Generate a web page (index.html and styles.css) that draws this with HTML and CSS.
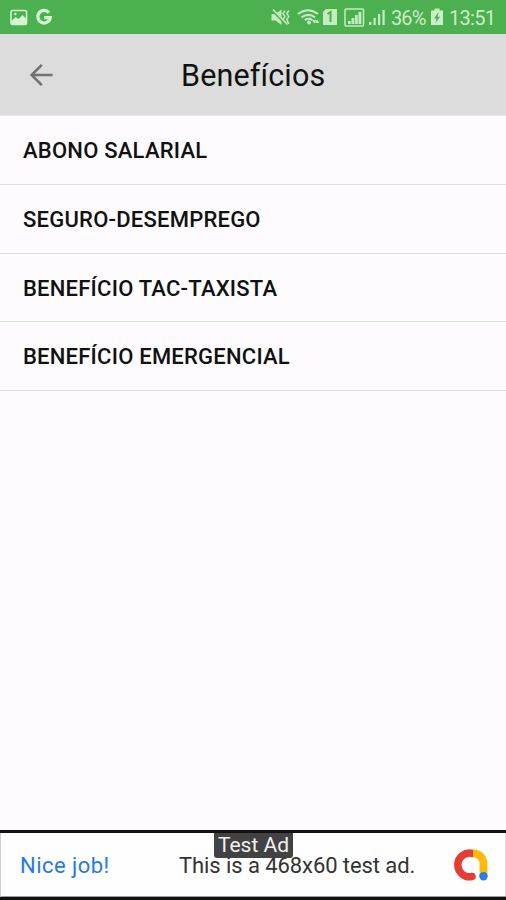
FILE: index.html
```html
<!DOCTYPE html>
<html lang="pt-BR">
<head>
<meta charset="utf-8">
<title>Benefícios</title>
<link rel="stylesheet" href="styles.css">
</head>
<body>
<div class="screen">
  <div class="status">
    <svg class="status-icons" width="60" height="34" viewBox="0 0 60 34">
      <rect x="11" y="10.500" width="15.500" height="14" rx="1.500" fill="none" stroke="#d3f5d0" stroke-width="1.600"/>
      <path d="M11.500 21l4-4 3 2 4-4 4 4v5h-15z" fill="#d3f5d0"/>
      <circle cx="15.300" cy="14" r="1.300" fill="#d3f5d0"/>
      <path d="M49 12.800A6.300 6.300 0 1 0 50.300 17.600H44.200" fill="none" stroke="#d3f5d0" stroke-width="3.300"/>
    </svg>
    <div class="status-right">
      <svg width="120" height="34" viewBox="270 0 120 34">
        <g fill="#c2edbd">
          <path d="M271.500 14h4l6-4.500v15.500l-6-4.500h-4z"/>
          <path d="M329 9h-3l-3 3v13h14V9z"/>
          <circle cx="309" cy="22.500" r="1.900"/>
          <path d="M312 20l2.200 3.500 2.200-3.500zM315 23l2.200-3.500 2.200 3.500z"/>
          <path d="M348 24v-3h2.800v3zM351.500 24v-6h2.800v6zM355 24v-9h2.800v9zM358.500 24V12h2.800v12z"/>
          <path d="M369 25v-3h2.400v3zM373.500 25v-7h2.200v7zM378 25V14h2.200v11zM382.500 25V10h2.200v15z"/>
        </g>
        <g fill="none" stroke="#c2edbd" stroke-width="2.100">
          <path d="M285 10.500l-2 3 2 3-2 3 2 4.500M288.800 10.500l-2 3 2 3-2 3 2 4.500" stroke-width="1.500"/>
          <path d="M298 14q10-7.500 20 0M301.500 17.300q7-5 13.500 0M304.800 20.200q4-3 7.500 0"/>
          <rect x="345" y="9" width="18.500" height="17" rx="1" stroke-width="1.500"/>
        </g>
        <path d="M272 10l15 15" stroke="#4caf50" stroke-width="2.500"/>
        <path d="M273 9.500l14.500 15" stroke="#c2edbd" stroke-width="1.700"/>
        <path d="M327.500 14l3-2v10" fill="none" stroke="#4caf50" stroke-width="2"/>
      </svg>
      <span class="percent">36%</span>
      <svg class="battery" width="12" height="34" viewBox="0 0 12 34">
        <path d="M3.500 8.500h5v2H12V25H0V10.500h3.500z" fill="#c9f0c5"/>
        <path d="M7.500 12L3 18.500h2.500L4.500 23 9 16.700H6.500z" fill="#57a95b"/>
      </svg>
      <span class="clock">13:51</span>
    </div>
  </div>
  <header class="bar">
    <svg class="back" width="24" height="24" viewBox="0 0 24 24">
      <path d="M12.800 1.800L2.600 12l10.200 10.200M2.600 12h21" fill="none" stroke="#727272" stroke-width="2.600"/>
    </svg>
    <h1 class="title">Benefícios</h1>
  </header>
  <ul class="list">
    <li>ABONO SALARIAL</li>
    <li>SEGURO-DESEMPREGO</li>
    <li>BENEFÍCIO TAC-TAXISTA</li>
    <li>BENEFÍCIO EMERGENCIAL</li>
  </ul>
  <footer class="ad">
    <span class="nice">Nice job!</span>
    <span class="message">This is a 468x60 test ad.</span>
    <svg class="logo" width="36" height="36" viewBox="0 0 36 36">
      <path d="M19.500 6.500A11.800 11.800 0 1 0 19 29.500" fill="none" stroke="#e53c33" stroke-width="7.500" stroke-linecap="round"/>
      <path d="M20 6.300c7.500 0 10.500 5 10.500 11.500V29" fill="none" stroke="#fbb90b" stroke-width="7.800"/>
      <circle cx="30.500" cy="29.200" r="4.200" fill="#287de8"/>
    </svg>
    <span class="badge">Test Ad</span>
  </footer>
</div>
</body>
</html>
```
FILE: styles.css
```css
* { box-sizing: border-box; }
body { margin: 0; font-family: Roboto, sans-serif; background: #fdfbfe; }
.screen { width: 506px; height: 900px; display: flex; flex-direction: column; }
svg { display: block; flex: none; }
.status { height: 34px; background: #4caf50; display: flex; justify-content: space-between; color: #c9f0c5; }
.status-right { display: flex; width: 236px; line-height: 36px; font-size: 20px; white-space: nowrap; }
.percent { width: 39px; margin-left: 1px; letter-spacing: -0.9px; }
.battery { margin-left: 1px; }
.clock { margin-left: 6px; letter-spacing: -0.7px; }
.bar { height: 82px; background: #dcdcdc; border-bottom: 1px solid #e9e8ea; display: flex; align-items: center; padding: 1px 0 0 29px; }
.title { margin: 2px 0 0 128px; font-size: 30.5px; font-weight: 400; color: #111; line-height: 36px; letter-spacing: 0.15px; }
.list { list-style: none; margin: 0; padding: 0; flex: 1; }
.list li { height: 68.75px; border-bottom: 1.5px solid #e0dee1; padding-left: 23px; font-size: 22px; font-weight: 500; line-height: 69px; color: #111; letter-spacing: 0.23px; white-space: nowrap; }
.ad { height: 70px; position: relative; display: flex; align-items: center; background: #fefefe; border-top: 3px solid #111; border-bottom: 3px solid #111; padding-left: 20px; box-shadow: inset 1px 0 #c9cfd1, inset 0 -1px #999, inset -1px 0 #ddd; white-space: nowrap; }
.nice { width: 159px; font-size: 22px; color: #2879df; letter-spacing: 0.45px; }
.message { width: 274px; font-size: 22px; color: #333; letter-spacing: -0.08px; }
.badge { position: absolute; left: 214px; top: 0; width: 79px; height: 25px; background: #424242; border-radius: 0 0 3px 3px; color: #f2f2f2; font-size: 21px; line-height: 25px; text-align: center; }
```
